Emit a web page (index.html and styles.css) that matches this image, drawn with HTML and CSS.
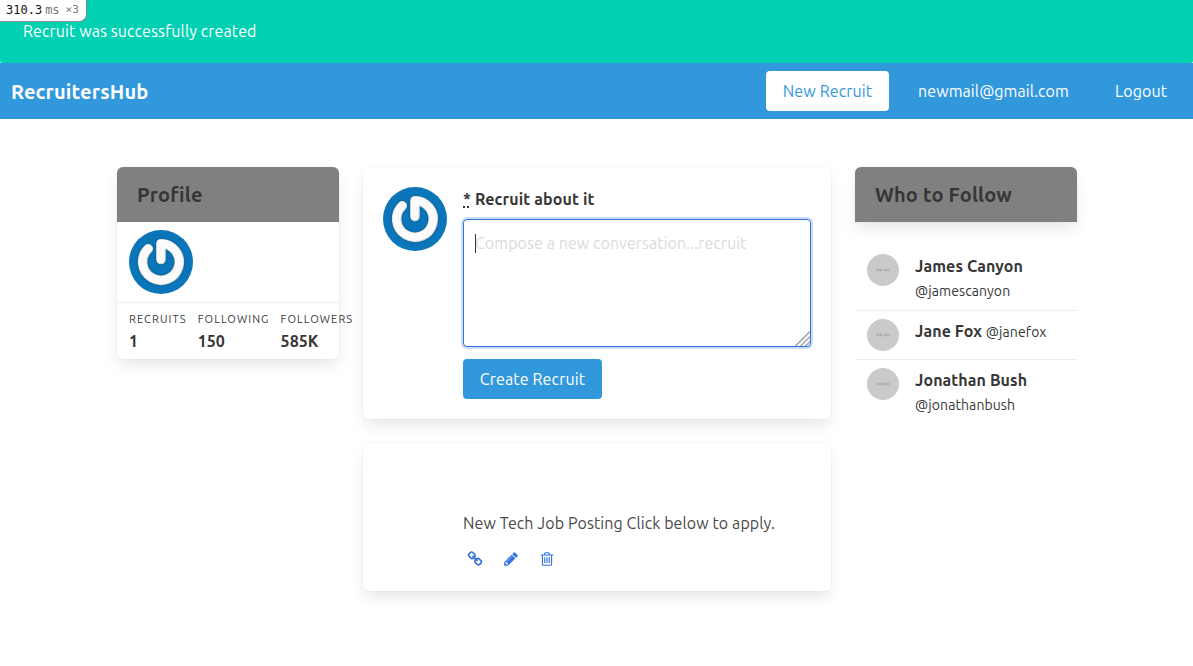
FILE: index.html
```html
<!DOCTYPE html>
<html lang="en">
<head>
<meta charset="utf-8">
<title>RecruitersHub</title>
<link rel="stylesheet" href="styles.css">
</head>
<body>
<svg width="0" height="0" class="defs">
  <defs>
    <filter id="soft" x="-20%" y="-20%" width="140%" height="140%"><feGaussianBlur stdDeviation="0.8"/></filter>
    <symbol id="avatar" viewBox="0 0 64 64">
      <circle cx="32" cy="32" r="32" fill="#0a76b9"/>
      <path d="M32 29.500V13.700A18.300 18.300 0 1 1 19.300 18.800" fill="none" stroke="#06517f" stroke-opacity=".55" stroke-width="10.400" stroke-linecap="round" stroke-linejoin="round" filter="url(#soft)"/>
      <path d="M32 29.500V13.700A18.300 18.300 0 1 1 19.300 18.800" fill="none" stroke="#d6d6d6" stroke-width="9.600" stroke-linecap="round" stroke-linejoin="round"/>
      <path d="M31.700 29.200V13.500A18.300 18.300 0 1 1 19.100 18.600" fill="none" stroke="#fbfbfb" stroke-width="8" stroke-linecap="round" stroke-linejoin="round"/>
    </symbol>
    <symbol id="person" viewBox="0 0 32 32">
      <circle cx="16" cy="16" r="16" fill="#cacaca"/>
      <path d="M9.500 16H15M17.300 16H22.600" stroke="#a4a4a4" stroke-width="2.600" stroke-dasharray="1 .6"/>
      <path d="M15.700 16h1" stroke="#a0a0a0" stroke-width="1.200"/>
    </symbol>
  </defs>
</svg>
<div class="timing"><b>310.3</b><span>ms</span><i>×3</i></div>
<div class="notification">Recruit was successfully created</div>
<nav class="navbar">
  <a class="brand">RecruitersHub</a>
  <div class="nav-end">
    <a class="button inverted">New Recruit</a>
    <a class="nav-item mail">newmail@gmail.com</a>
    <a class="nav-item logout">Logout</a>
  </div>
</nav>
<main class="columns">
  <aside class="card profile">
    <header class="card-head">Profile</header>
    <div class="profile-pic"><svg class="avatar"><use href="#avatar"/></svg></div>
    <div class="stats">
      <div class="stat"><span>RECRUITS</span><strong>1</strong></div>
      <div class="stat"><span>FOLLOWING</span><strong>150</strong></div>
      <div class="stat"><span>FOLLOWERS</span><strong>585K</strong></div>
    </div>
  </aside>
  <section class="feed">
    <article class="card compose">
      <svg class="avatar"><use href="#avatar"/></svg>
      <form class="form">
        <label class="label" for="body"><abbr>*</abbr> <span>Recruit about it</span></label>
        <div class="field">
          <textarea id="body" placeholder="Compose a new conversation...recruit"></textarea>
          <i class="caret"></i>
          <svg class="grip" viewBox="0 0 15 15"><path d="M.5 15L15 .5M5.500 15L15 5.500M10.500 15l4.500-4.500" stroke="#aaa" stroke-width="1.600" fill="none"/></svg>
        </div>
        <button type="button" class="button primary">Create Recruit</button>
      </form>
    </article>
    <article class="card post">
      <p class="post-text">New Tech Job Posting Click below to apply.</p>
      <div class="actions">
        <a><svg viewBox="0 0 1792 1792"><path d="M1520 1216q0-40-28-68l-208-208q-28-28-68-28-42 0-72 32 3 3 19 18.500t21.500 21.500 15 19 13 25.500 3.500 27.500q0 40-28 68t-68 28q-15 0-27.500-3.500t-25.500-13-19-15-21.500-21.500-18.500-19q-33 31-33 73 0 40 28 68l206 207q27 27 68 27 40 0 68-26l147-146q28-28 28-67zm-703-705q0-40-28-68l-206-207q-28-28-68-28-39 0-68 27l-147 146q-28 28-28 67 0 40 28 68l208 208q27 27 68 27 42 0 72-31-3-3-19-18.500t-21.500-21.500-15-19-13-25.500-3.500-27.500q0-40 28-68t68-28q15 0 27.500 3.500t25.500 13 19 15 21.500 21.500 18.500 19q33-31 33-73zm895 705q0 120-85 203l-147 146q-83 83-203 83-121 0-204-85l-206-207q-83-83-83-203 0-123 88-209l-88-88q-86 88-208 88-120 0-204-84l-208-208q-84-84-84-204t85-203l147-146q83-83 203-83 121 0 204 85l206 207q83 83 83 203 0 123-88 209l88 88q86-88 208-88 120 0 204 84l208 208q84 84 84 204z"/></svg></a>
        <a><svg viewBox="0 0 1792 1792"><path d="M491 1536l91-91-235-235-91 91v107h128v128h107zm523-928q0-22-22-22-10 0-17 7l-542 542q-7 7-7 17 0 22 22 22 10 0 17-7l542-542q7-7 7-17zm-54-192l416 416-832 832h-416v-416zm683 96q0 53-37 90l-166 166-416-416 166-165q36-38 90-38 53 0 91 38l235 234q37 39 37 91z"/></svg></a>
        <a><svg viewBox="0 0 1792 1792"><path d="M704 736v576q0 14-9 23t-23 9h-64q-14 0-23-9t-9-23v-576q0-14 9-23t23-9h64q14 0 23 9t9 23zm256 0v576q0 14-9 23t-23 9h-64q-14 0-23-9t-9-23v-576q0-14 9-23t23-9h64q14 0 23 9t9 23zm256 0v576q0 14-9 23t-23 9h-64q-14 0-23-9t-9-23v-576q0-14 9-23t23-9h64q14 0 23 9t9 23zm128 724v-948h-896v948q0 22 7 40.500t14.500 27 10.500 8.500h832q3 0 10.500-8.500t14.500-27 7-40.500zm-672-1076h448l-48-117q-7-9-17-11h-317q-10 2-17 11zm928 32v64q0 14-9 23t-23 9h-96v948q0 83-47 143.500t-113 60.500h-832q-66 0-113-58.500t-47-141.500v-952h-96q-14 0-23-9t-9-23v-64q0-14 9-23t23-9h309l70-167q15-37 54-63t79-26h320q40 0 79 26t54 63l70 167h309q14 0 23 9t9 23z"/></svg></a>
      </div>
    </article>
  </section>
  <aside class="follow">
    <header class="card-head raised">Who to Follow</header>
    <ul class="people">
      <li><svg><use href="#person"/></svg><p><strong>James Canyon</strong><br><small>@jamescanyon</small></p></li>
      <li><svg><use href="#person"/></svg><p><strong>Jane Fox</strong> <small>@janefox</small></p></li>
      <li><svg><use href="#person"/></svg><p><strong>Jonathan Bush</strong><br><small>@jonathanbush</small></p></li>
    </ul>
  </aside>
</main>
</body>
</html>
```
FILE: styles.css
```css
* { box-sizing: border-box; margin: 0; padding: 0; }
body {
  min-height: 100vh;
  background: #fff;
  color: #363636;
  font: 16px/24px Ubuntu, "Noto Sans", sans-serif;
  letter-spacing: .09px;
}
svg { display: block; }
.defs { position: absolute; }

.timing {
  position: absolute;
  top: 0;
  left: 0;
  width: 87px;
  height: 22px;
  padding: 0 0 1px 6px;
  display: flex;
  align-items: center;
  background: #fff;
  border: solid #888;
  border-width: 0 1px 1px 0;
  border-bottom-right-radius: 8px;
  font: 12px/20px "DejaVu Sans Mono", monospace;
  letter-spacing: 0;
  color: #111;
}
.timing b { font-weight: 400; }
.timing span { color: #777; margin-left: 3px; }
.timing i { color: #777; font-style: normal; font-size: 11px; margin-left: 6px; }

.notification {
  height: 63px;
  padding: 19px 23px 20px;
  background: #00d1b2;
  color: #fff;
  letter-spacing: .11px;
  border-radius: 0 0 2px 2px;
}
.navbar {
  height: 56px;
  padding: 0 15px 0 11px;
  display: flex;
  justify-content: space-between;
  align-items: center;
  background: #3298dc;
  color: #fff;
}
.brand { font-size: 20px; font-weight: 700; letter-spacing: .17px; position: relative; top: 1px; }
.nav-end { display: flex; align-items: center; }
.nav-item { padding: 0 12px; white-space: nowrap; }
.mail { width: 174px; margin-left: 17px; }
.logout { width: 75px; margin-left: 23px; }
.button {
  display: flex;
  align-items: center;
  justify-content: center;
  height: 40px;
  border: 0;
  border-radius: 4px;
  font: inherit;
  letter-spacing: .15px;
}
.inverted { width: 123px; background: #fff; color: #3298dc; }
.primary { width: 139px; margin-top: 12px; background: #3298dc; color: #fff; }

.columns {
  width: 960px;
  margin: 48px 116px 0 117px;
  padding-bottom: 48px;
  display: grid;
  grid-template-columns: 222px 468px 222px;
  gap: 24px;
  align-items: start;
}
.card, .raised {
  box-shadow: 0 8px 16px -2px rgba(10, 10, 10, .1), 0 0 0 1px rgba(10, 10, 10, .02);
}
.card { border-radius: 6px; background: #fff; }
.card-head {
  height: 55px;
  padding: 16px 20px;
  border-radius: 6px 6px 0 0;
  background: #808080;
  font-size: 20px;
  font-weight: 700;
  letter-spacing: .15px;
}
.profile-pic { padding: 8px 12px; border-bottom: 1px solid #ededed; }
.avatar { width: 64px; height: 64px; flex: none; }
.stats { display: flex; gap: 11px; height: 56px; padding: 8px 12px; }
.stat { flex: none; }
.stat span { display: block; font-size: 11px; line-height: 17px; letter-spacing: 1.12px; }
.stat strong { display: block; line-height: 26px; }

.feed { display: flex; flex-direction: column; gap: 24px; }
.compose { display: flex; gap: 16px; height: 252px; padding: 20px; }
.form { flex: 1; }
.label { display: block; height: 32px; font-weight: 700; letter-spacing: .12px; }
.label abbr { text-decoration: underline dotted; text-decoration-thickness: 2px; }
.field { position: relative; height: 128px; }
textarea {
  display: block;
  width: 348px;
  height: 128px;
  padding: 11px;
  resize: none;
  outline: 0;
  border: 1px solid #3273dc;
  border-radius: 4px;
  box-shadow: 0 0 0 2px rgba(50, 115, 220, .25);
  font: inherit;
  letter-spacing: .07px;
}
textarea::placeholder { color: #dbdbdb; opacity: 1; }
.caret { position: absolute; left: 12px; top: 15px; width: 1px; height: 19px; background: #363636; }
.grip { position: absolute; right: 1px; bottom: 1px; width: 15px; height: 15px; }

.post { height: 148px; padding: 68px 20px 0 100px; color: #4a4a4a; }
.post-text { white-space: nowrap; }
.actions { display: flex; gap: 12px; margin-top: 12px; }
.actions a { display: grid; place-items: center; width: 24px; height: 24px; }
.actions svg { width: 16px; height: 16px; fill: #3273dc; }

.people { list-style: none; padding-top: 24px; }
.people li { display: flex; gap: 16px; padding: 8px 12px; }
.people li:first-child { height: 64px; }
.people li + li { border-top: 1px solid #ededed; }
.people svg { width: 32px; height: 32px; flex: none; }
.people p { white-space: nowrap; }
.people small { font-size: 14px; }
```
